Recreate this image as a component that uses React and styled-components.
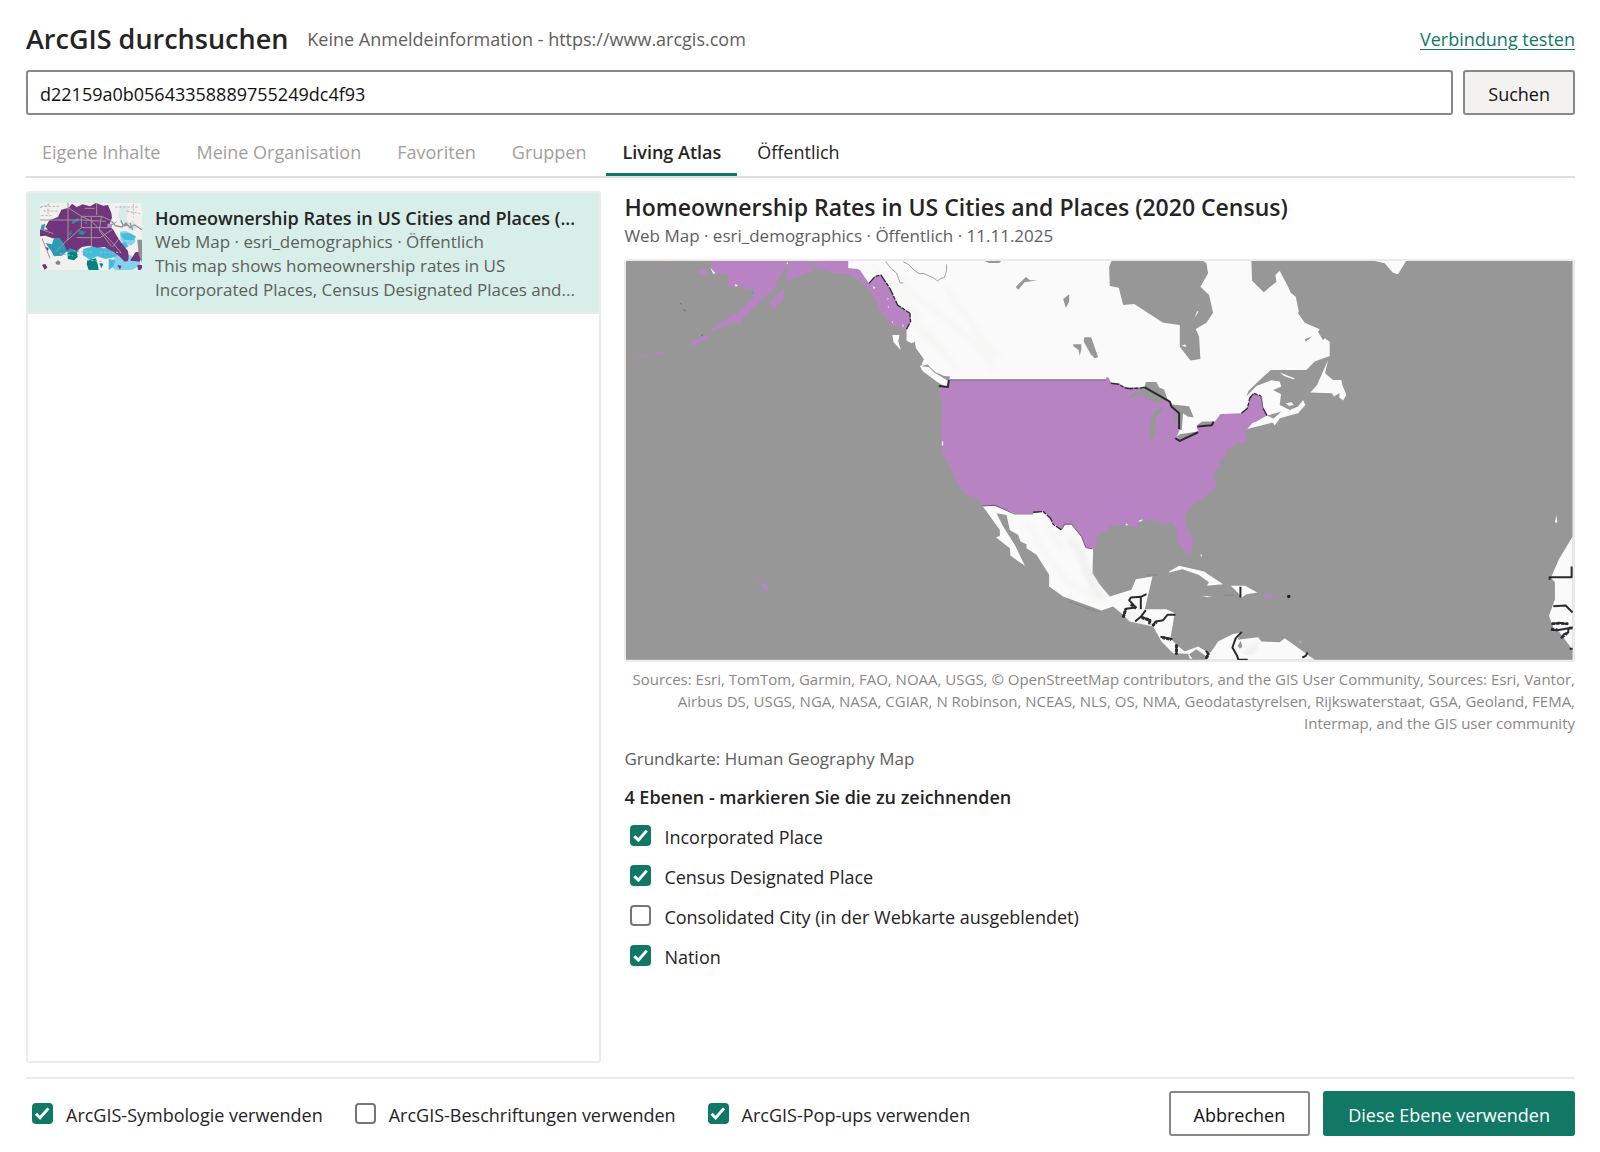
import { useState } from 'react'
import styled, { createGlobalStyle } from 'styled-components'

const GlobalStyle = createGlobalStyle`
	* {
		box-sizing: border-box;
	}
	body {
		margin: 0;
		background: #fff;
		color: #252423;
		font: 18px/24px 'Open Sans', 'Noto Sans', sans-serif;
	}
	button, input {
		font: inherit;
		margin: 0;
	}
	h1, h2, h3, p {
		margin: 0;
		font-weight: 600;
	}
`

const Page = styled.div`
	min-height: 100vh;
	padding: 19px 25px 16px 26px;
	display: flex;
	flex-direction: column;
`

const Header = styled.header`
	display: flex;
	align-items: center;
	gap: 19px;
	height: 40px;
`

const Title = styled.h1`
	font-size: 27px;
	line-height: 40px;
`

const Account = styled.span`
	flex: 1;
	color: #605e5c;
`

const TestLink = styled.a`
	color: #117865;
	text-underline-offset: 3px;
`

const SearchRow = styled.div`
	display: flex;
	gap: 10px;
	margin-top: 11px;
`

const SearchInput = styled.input`
	flex: 1;
	min-width: 0;
	height: 45px;
	padding: 2px 12px 0;
	border: 2px solid #8a8886;
	border-radius: 3px;
	background: #fff;
	color: #111;
`

const Button = styled.button`
	height: 45px;
	padding: 2px 23px 0;
	border: 2px solid ${p => (p.$variant === 'primary' ? '#117865' : '#8a8886')};
	border-radius: 3px;
	background: ${p =>
		({ primary: '#117865', soft: '#f3f2f1' })[p.$variant] || '#fff'};
	color: ${p => (p.$variant === 'primary' ? '#fff' : '#111')};
	white-space: nowrap;
`

const Tabs = styled.div`
	display: flex;
	gap: 4px;
	margin-top: 12px;
	border-bottom: 2px solid #e1dfdd;
`

const Tab = styled.button`
	height: 49px;
	padding: 0 16px;
	border: 0;
	background: none;
	box-shadow: ${p => (p.$active ? 'inset 0 -3px #117865' : 'none')};
	color: #252423;
	font-weight: ${p => (p.$active ? 600 : 400)};

	&:disabled {
		color: #a19f9d;
	}
`

const Main = styled.main`
	flex: 1;
	display: grid;
	grid-template-columns: minmax(0, 23fr) minmax(0, 38fr);
	gap: 23px;
	margin-top: 13px;
`

const ResultList = styled.section`
	border: 2px solid #edebe9;
	border-radius: 3px;
`

const Result = styled.article`
	display: flex;
	gap: 13px;
	padding: 10px 12px;
	border-bottom: 2px solid #edebe9;
	background: #d7efe8;
`

const Thumb = styled.svg`
	flex: none;
	width: 102px;
	height: 67px;
	border-radius: 3px;
`

const ResultText = styled.div`
	flex: 1;
	min-width: 0;
	padding-top: 3px;
`

const ResultTitle = styled.h3`
	font-size: 18px;
	line-height: 24px;
	white-space: nowrap;
`

const Meta = styled.p`
	color: #605e5c;
	font-size: 17px;
	font-weight: 400;
`

const Detail = styled.section`
	display: flex;
	flex-direction: column;
`

const DetailTitle = styled.h2`
	font-size: 23px;
	line-height: 32px;
`

const Info = styled(Meta)`
	line-height: 26px;
`

const MapCanvas = styled.svg`
	display: block;
	width: 100%;
	margin-top: 10px;
	border: 2px solid #edebe9;
	border-radius: 3px;
`

const Credits = styled.p`
	margin-top: 6px;
	color: #8a8886;
	font-size: 15px;
	font-weight: 400;
	line-height: 22px;
	text-align: right;
`

const BaseMap = styled(Info)`
	margin-top: 12px;
`

const LayerTitle = styled.h3`
	margin: 12px 0 6px;
	font-size: 18px;
	line-height: 26px;
`

const CheckRow = styled.div`
	display: flex;
	align-items: center;
	gap: 13px;
	height: 40px;
	padding-left: 6px;
`

const CheckLabel = styled.label`
	padding-top: 2px;
`

const CheckBox = styled.input`
	appearance: none;
	flex: none;
	width: 21px;
	height: 21px;
	border: 2px solid #767676;
	border-radius: 4px;
	background: #fff;

	&:checked {
		border-color: #117865;
		background: #117865;
	}
	/* tick */
	&:checked::after {
		content: '';
		display: block;
		height: 100%;
		background: #fff;
		clip-path: polygon(5% 58%, 18% 46%, 35% 63%, 78% 14%, 91% 25%, 36% 88%);
	}
`

const Footer = styled.footer`
	display: flex;
	align-items: center;
	gap: 13px;
	margin-top: 14px;
	padding-top: 12px;
	border-top: 2px solid #edebe9;
`

const Options = styled.div`
	flex: 1;
	display: flex;
	gap: 26px;
`

const TABS = [
	{ id: 'own', label: 'Eigene Inhalte', disabled: true },
	{ id: 'org', label: 'Meine Organisation', disabled: true },
	{ id: 'fav', label: 'Favoriten', disabled: true },
	{ id: 'groups', label: 'Gruppen', disabled: true },
	{ id: 'atlas', label: 'Living Atlas' },
	{ id: 'public', label: 'Öffentlich' },
]

const LAYERS = [
	{ id: 'place', label: 'Incorporated Place', checked: true },
	{ id: 'cdp', label: 'Census Designated Place', checked: true },
	{
		id: 'city',
		label: 'Consolidated City (in der Webkarte ausgeblendet)',
		checked: false,
	},
	{ id: 'nation', label: 'Nation', checked: true },
]

const OPTIONS = [
	{ id: 'symbols', label: 'ArcGIS-Symbologie verwenden', checked: true },
	{ id: 'labels', label: 'ArcGIS-Beschriftungen verwenden', checked: false },
	{ id: 'popups', label: 'ArcGIS-Pop-ups verwenden', checked: true },
]

// small preview of the web map in the result list
function Thumbnail() {
	return (
		<Thumb viewBox="0 0 306 201" preserveAspectRatio="none" aria-hidden="true">
			<rect width="306" height="201" fill="#f3f1ef" />
			<g fill="#d8ebea">
				<path d="M240 8h22l6 18-10 14 8 20-18 4-14-24z" />
				<path d="M262 62l18-10 12 16-8 16-20-4z" />
			</g>
			<path
				d="M214 190l14-38 28-6 22 16 18-10 6 34-26 15h-50zM240 86l16-2 22 10 8 22-14 12-30-14z"
				fill="#86d1ee"
			/>
			<path
				d="M130 138l28-8 34 6 32-2 16 14-14 14-30 6-24-8-22 10-22-14zM240 92l26-2 22 10-6 12-30-2zM242 120l14-4 10 14-10 6zM206 168l20 4-6 20-14 9z"
				fill="#45bcdc"
			/>
			<path
				d="M16 120l20 4 6-18 34-10 8 20 22 10 10 18-12 14-24-12-14 12-24 2-8-16zM4 66l12-4-4 18-10 4z"
				fill="#2a9db5"
			/>
			<path
				d="M82 150l24-6 10 16-14 12-18-4zM142 172l26-6 6 22 2 13h-30l-6-18zM178 180l12 2-6 14z"
				fill="#038282"
			/>
			<path
				d="M24 80l-8-8 12-20 26-10 10-22 22-6 10-12 14 10 18-8 22 6 18-10 22 8 14-2 10 24 2 14-6 16 0 12 10 8 10 18 16 24 18 22 2 18-2 12-10 2-16-16-18-14-26-14-22 2-24-6-22 4-16 12-20-8-10 8-8-22-14-18-20 2-22-8-16 2-8-22z"
				fill="#71357c"
			/>
			<path
				d="M6 186l10-4 6 12-8 6zM272 170l14-22 12-2 8 20-8 10-14-2h-12zM14 132l12 2-2 10zM232 186l12 2-4 12zM292 186h14v15h-12z"
				fill="#71357c"
			/>
			<path
				d="M94 56l20-12 4 8-20 12zM116 82l22 4-8 10-14-4zM86 92l10-10-4 16zM132 60l10-6-2 10z"
				fill="#1f8fa1"
			/>
			<g fill="none" stroke="#a3959c" strokeWidth="3">
				<path d="M0 51h126l72 4M84 0v108l-36 38M84 14l40 26 30 14 26 26 38 40 26 30M124 40h60l28 12M124 40v34l-42 38M154 42v88M124 74l80 0 26-18M110 104h70l36-24M184 40l-6 42 36 48M134 16h30" />
				<path d="M0 78l40 14M170 0v36M218 132l18-24M6 106l24 60" />
			</g>
			<path
				d="M214 54l12 14 20 4 12-12 12 14 14-8 22 14M242 52l8 16 14-2M270 60l8 20"
				fill="none"
				stroke="#959093"
				strokeWidth="4"
			/>
			<path d="M202 62h14v12h-14z" fill="#b98bc4" />
			<path d="M292 110h14v70l-10-24z" fill="#8e9192" />
			<g fill="none" stroke="#b7b4b4" strokeWidth="3" strokeDasharray="7 5">
				<path d="M2 10h60M10 24h44M4 38h30M0 14l30-12M24 4v30M226 12h70M260 24l40 8M280 4v40M100 144l60 4M130 170l60 6M60 152l38 6M180 148h62" />
			</g>
			<path
				d="M40 168l30-10 14 12-4 16 20 0 14 14H30zM112 156l22 4 6 20-14 14-10-14z"
				fill="#f3f1ef"
			/>
			<path d="M46 178l8-6 8 6-4 8-10-2z" fill="#8a8488" />
		</Thumb>
	)
}

// North America, U.S. area filled, everything else plain land
function MapPreview() {
	return (
		<MapCanvas viewBox="0 0 2841 1197" role="img" aria-label="Kartenvorschau">
			<defs>
				<filter id="relief" x="0" y="0" width="100%" height="100%">
					<feGaussianBlur stdDeviation="9" />
				</filter>
			</defs>
			<rect width="2841" height="1197" fill="#979797" />
			<g fill="#fafafa">
				<path d="M666 0V22L697 24 724 67 842 150V239L857 247 867 242 870 262 878 272 894 295 887 310 905 312 930 335 965 350 972 380H1540L1600 540H1720L1960 480 1924 464 1967 452 1937 479 1947 494 1962 472 2017 457 2039 432 2032 417 2017 437 1992 447 1962 432 1966 400 1942 387 1967 377 1962 362 1937 358 1892 375 1862 407 1868 390 1897 362 1935 327H2042L2067 302 2112 285V242L2097 232 2092 238 2077 212 2082 205 2037 185 2017 157 2019 150 2010 107 1995 95 1987 77 1962 29 1949 42 1952 62 1914 94 1879 59 1877 0z" />
				<path d="M882 315L894 310 910 320 925 335 970 362 968 375 955 376 930 360 890 330z" />
				<path d="M799 222H821L817 240 825 268 803 243z" />
				<path d="M2107 297L2098 337 2122 357H2147L2150 372 2162 402 2152 419 2141 410V396L2125 407 2118 397 2054 395 2074 372z" />
				<path d="M1962 335L2006 352 2004 356 1975 345zM1980 427L1998 424 2004 432 1990 435z" />
				<path d="M2247 0L2277 7 2302 35 2317 40 2328 22 2341 0z" />
				<path d="M1070 735L1122 807V825L1110 829 1152 862 1154 885 1197 915 1167 852 1132 797 1112 757 1142 762 1152 807 1177 822 1184 842 1202 850V862L1232 882 1270 942V977L1312 1007 1427 1049 1462 1037 1492 1062 1512 1082 1582 1097 1607 1142 1642 1177 1687 1179 1692 1194H1700L1690 1180 1712 1165 1742 1187 1737 1197H2067L1977 1132 1962 1144 1907 1142 1897 1129 1835 1137 1846 1115 1820 1120 1777 1142 1757 1172 1742 1180V1172L1717 1157 1677 1172 1652 1152 1634 1132 1647 1057 1622 1045H1557L1580 947 1530 955 1517 987 1452 1007 1422 972 1400 937 1402 865 1410 780 1150 700z" />
				<path d="M1630 932L1660 915 1735 932 1792 970 1743 975 1750 964 1718 942 1670 925 1630 935zM1815 975H1858L1895 995 1862 1000 1848 1010 1836 995zM1728 1005L1760 1008 1745 1009z" />
				<path d="M2841 827L2800 895 2776 950 2788 965V1015L2770 1065 2785 1105 2800 1112 2838 1163H2841zM2792 762L2795 785H2788z" />
			</g>
			{/* faint mountain relief */}
			<g fill="none" stroke="#f3f2f0" strokeWidth="9" filter="url(#relief)">
				<path d="M820 40L850 90 900 130 980 190 1060 260 1110 330M860 170L890 220 930 250 1000 330M740 10L790 60 880 170M960 70L990 130 1030 170 1070 240 1120 290M900 200L960 290M1200 780L1260 880 1320 960 1420 1020M1260 790L1310 870" />
				<path
					d="M1330 830L1360 870 1375 910 1400 970 1430 1010M1860 1180L1900 1150M1500 1060L1560 1080"
					stroke="#e2e1df"
				/>
			</g>
			<g fill="#b883c3">
				<path d="M939 375L955 376 968 375 970 357H1440L1442 349 1448 350 1457 367 1480 370 1510 383 1540 382 1557 379 1632 422 1660 457V512L1652 530 1717 512 1712 495 1760 492 1784 459 1847 457 1865 442 1872 412 1884 397 1895 402 1909 405 1912 442 1924 464 1892 482 1880 486 1862 507 1860 528 1867 537 1850 544 1827 552 1802 567 1806 580 1792 592 1780 600 1784 612 1770 625 1764 650 1772 657 1767 682 1737 707 1702 732 1679 757V787L1702 842 1697 875 1682 879 1657 842 1652 802 1637 785 1612 789 1592 779H1542L1534 790 1547 805 1522 799 1502 792 1457 794 1412 829 1410 865 1380 860 1367 827 1337 790H1317L1307 807 1282 787 1274 772 1252 752 1222 757H1167L1107 735H1070L1057 715 1012 695 990 657 977 625 952 577 944 512 950 447z" />
				<path d="M257 0L252 12 272 42 305 37 309 85 342 72 362 89 382 79 379 112 337 152 320 162 257 202V212L317 187 335 182 345 195 343 178 367 157 397 127 452 77V62L482 12 487 0z" />
				<path d="M489 0L477 62 517 47 545 32 551 40 567 17 617 35 667 39 707 62 737 92 767 157 792 182 797 202 804 192 812 204 818 190 826 205 842 205 854 182 852 157 815 132 792 82 765 42 747 47 729 67 702 27 667 22V0z" />
				<path d="M472 80L475 98 466 122 442 145 429 122 455 102zM215 30L240 22 246 35 235 43 215 38zM116 16l14 6-2 4z" />
				<path d="M187 257L210 235 250 220 245 232 215 247 189 257zM80 280L100 270 118 277 102 279zM30 284H62V288H32zM170 258l8-4-4 6z" />
				<path d="M1915 1000H1940L1946 1006 1936 1010H1918zM408 970l10-4 8 14-6 10-8-6zM388 953l12 2 6 6-12-2zM370 942h8v5h-8z" />
			</g>
			<g fill="#979797">
				<path d="M1457 0L1450 17 1452 75 1479 80 1492 132 1525 129 1612 185 1662 192V257L1694 299 1724 294 1720 227 1710 204 1742 185 1762 155 1750 102 1724 77 1747 37 1742 7 1732 0z" />
				<path d="M1170 78L1200 48 1212 58 1236 58 1196 64 1177 86zM1312 114L1330 100V122L1320 141zM1375 229H1396L1417 289 1407 292 1395 280 1374 242zM1342 250H1366L1367 262 1362 285 1358 266 1344 257zM1075 0H1126L1120 6H1090z" />
				<path d="M1502 415L1530 392 1557 376 1560 363H1592L1600 380 1615 386 1627 420 1600 422 1585 425 1560 408 1540 400 1515 412z" />
				<path d="M1570 535L1574 475 1585 450 1612 440 1606 452 1590 470 1592 510 1585 535z" />
				<path d="M1632 430L1690 436 1704 470 1685 467 1672 457 1668 507 1660 508 1655 455 1638 445zM1640 490L1650 455 1655 480z" />
				<path d="M1648 532L1662 520 1717 512 1702 524 1662 540zM1712 494L1730 482 1762 482 1758 494z" />
				<path d="M2037 235L2060 226 2040 242zM1836 1155L1845 1140 1850 1158 1842 1164zM888 315l18-4 6 8-20-2zM932 332l20 14 20 0 -2 12-14-6z" />
				<path d="M545 10l12-8 8 12-12 8z" />
			</g>
			<path
				d="M1707 170L1714 150 1718 152zM1668 254l10-4 4 8zM253 20L268 36 262 40zM326 70l10 2-6 6zM740 75l8 4-4 6zM785 110l4 4-4 2zM786 134l4 4-4 2zM798 180l4 4-4 2zM830 190l4 4-4 4zM480 10l6-8v6zM948 542h4v12h-4zM1540 778l12-2-10 8zM1500 788l8 4-8 2zM1725 878l4 6-4 4zM2020 1142h6v4z"
				fill="#fafafa"
			/>
			<path d="M378 92h6v6h-6zM375 112h4v4h-4z" fill="#45a8dc" />
			<g fill="none" stroke="#2a2a2e" strokeWidth="6" strokeLinejoin="round">
				<path d="M939 375L966 378 969 357M1557 379L1632 422 1637 437 1660 457V504M1648 532L1662 540 1717 514M1715 497L1758 493 1764 482" />
				<path
					d="M729 67L747 47 765 42 792 82 815 132 852 157 854 182 842 205M1455 367L1480 370 1495 380 1510 383 1538 382 1557 379M1847 457L1865 442 1872 412 1884 397 1905 405M1912 442L1924 464M1222 754L1252 752 1274 772 1282 790 1307 807"
					strokeWidth="4"
					strokeDasharray="26 3 12 4"
				/>
				<path
					d="M1070 735L1107 733 1165 759H1222M1307 807L1317 790 1337 790 1367 827 1380 860 1400 864M1905 405L1912 442"
					stroke="#6b6070"
					strokeWidth="3"
				/>
				<path d="M1492 1070L1500 1044 1530 1040 1510 1018 1515 1010 1545 1008 1562 1000M1545 1008V1045M1528 1082L1545 1068 1572 1078 1570 1090M1545 1068L1560 1048M1580 1095L1590 1082 1612 1078 1625 1062 1649 1062M1604 1128L1640 1135M1652 1150V1182M1740 1195L1748 1178 1740 1170M1848 1113L1830 1132 1820 1160 1834 1185 1838 1197 1866 1197M1844 978V1010M2046 1175L2040 1185 2030 1190M1986 1005l6 4" />
				<path
					d="M1492 1070l8-26M1515 1030l16 12M1548 1070l24 8 0 12M1580 1095l12-12M1610 1130l26 6M1652 1152v28M1742 1192l6-14"
					strokeWidth="9"
					strokeDasharray="9 3"
				/>
				<path d="M2772 957V949H2838V917M2783 1036L2820 1034 2841 1055M2778 1090L2800 1086 2828 1090M2776 1107L2795 1108 2841 1100M2806 1133L2815 1120 2828 1115V1104M2832 1164h9" />
				<path
					d="M2778 1088L2828 1088M2776 1105l20 2M2808 1130l16-12M2830 1102h11"
					strokeWidth="8"
					strokeDasharray="10 4"
				/>
			</g>
			<g fill="none" stroke="#a2a2a2" strokeWidth="3">
				<path d="M970 357H1440" stroke="#77707a" strokeWidth="4" />
				<path d="M780 2L795 22 812 36 822 65 832 66M832 2L850 12 865 28 880 38 892 37 910 45 925 52 935 60 945 52 955 50 962 30 962 10" />
				<path
					d="M1330 1022L1420 1055M1560 942h36M1795 1003h30"
					stroke="#858585"
				/>
				<path d="M162 126l6 4M172 146l8 4M226 224l6-4" stroke="#6d6470" />
			</g>
			<circle cx="1989" cy="1007" r="5" fill="#222" />
		</MapCanvas>
	)
}

function CheckItem({ id, label, checked, onChange }) {
	return (
		<CheckRow>
			<CheckBox
				type="checkbox"
				id={id}
				checked={checked}
				onChange={() => onChange(id)}
			/>
			<CheckLabel htmlFor={id}>{label}</CheckLabel>
		</CheckRow>
	)
}

function App() {
	const [tab, setTab] = useState('atlas')
	const [query, setQuery] = useState('d22159a0b05643358889755249dc4f93')
	const [layers, setLayers] = useState(LAYERS)
	const [options, setOptions] = useState(OPTIONS)

	const toggle = setter => id =>
		setter(list =>
			list.map(item =>
				item.id === id ? { ...item, checked: !item.checked } : item,
			),
		)

	return (
		<Page>
			<GlobalStyle />
			<Header>
				<Title>ArcGIS durchsuchen</Title>
				<Account>Keine Anmeldeinformation - https://www.arcgis.com</Account>
				<TestLink href="#test">Verbindung testen</TestLink>
			</Header>

			<SearchRow>
				<SearchInput
					aria-label="Suchbegriff"
					value={query}
					onChange={e => setQuery(e.target.value)}
				/>
				<Button $variant="soft">Suchen</Button>
			</SearchRow>

			<Tabs role="tablist">
				{TABS.map(({ id, label, disabled }) => (
					<Tab
						key={id}
						role="tab"
						aria-selected={tab === id}
						disabled={disabled}
						$active={tab === id}
						onClick={() => setTab(id)}
					>
						{label}
					</Tab>
				))}
			</Tabs>

			<Main>
				<ResultList>
					<Result>
						<Thumbnail />
						<ResultText>
							<ResultTitle>
								Homeownership Rates in US Cities and Places (...
							</ResultTitle>
							<Meta>Web Map · esri_demographics · Öffentlich</Meta>
							<Meta>
								This map shows homeownership rates in US Incorporated Places,
								Census Designated Places and...
							</Meta>
						</ResultText>
					</Result>
				</ResultList>

				<Detail>
					<DetailTitle>
						Homeownership Rates in US Cities and Places (2020 Census)
					</DetailTitle>
					<Info>Web Map · esri_demographics · Öffentlich · 11.11.2025</Info>
					<MapPreview />
					<Credits>
						Sources: Esri, TomTom, Garmin, FAO, NOAA, USGS, © OpenStreetMap
						contributors, and the GIS User Community, Sources: Esri, Vantor,
						Airbus DS, USGS, NGA, NASA, CGIAR, N Robinson, NCEAS, NLS, OS, NMA,
						Geodatastyrelsen, Rijkswaterstaat, GSA, Geoland, FEMA, Intermap, and
						the GIS user community
					</Credits>
					<BaseMap>Grundkarte: Human Geography Map</BaseMap>
					<LayerTitle>4 Ebenen - markieren Sie die zu zeichnenden</LayerTitle>
					{layers.map(layer => (
						<CheckItem key={layer.id} {...layer} onChange={toggle(setLayers)} />
					))}
				</Detail>
			</Main>

			<Footer>
				<Options>
					{options.map(option => (
						<CheckItem
							key={option.id}
							{...option}
							onChange={toggle(setOptions)}
						/>
					))}
				</Options>
				<Button>Abbrechen</Button>
				<Button $variant="primary">Diese Ebene verwenden</Button>
			</Footer>
		</Page>
	)
}
export default App
